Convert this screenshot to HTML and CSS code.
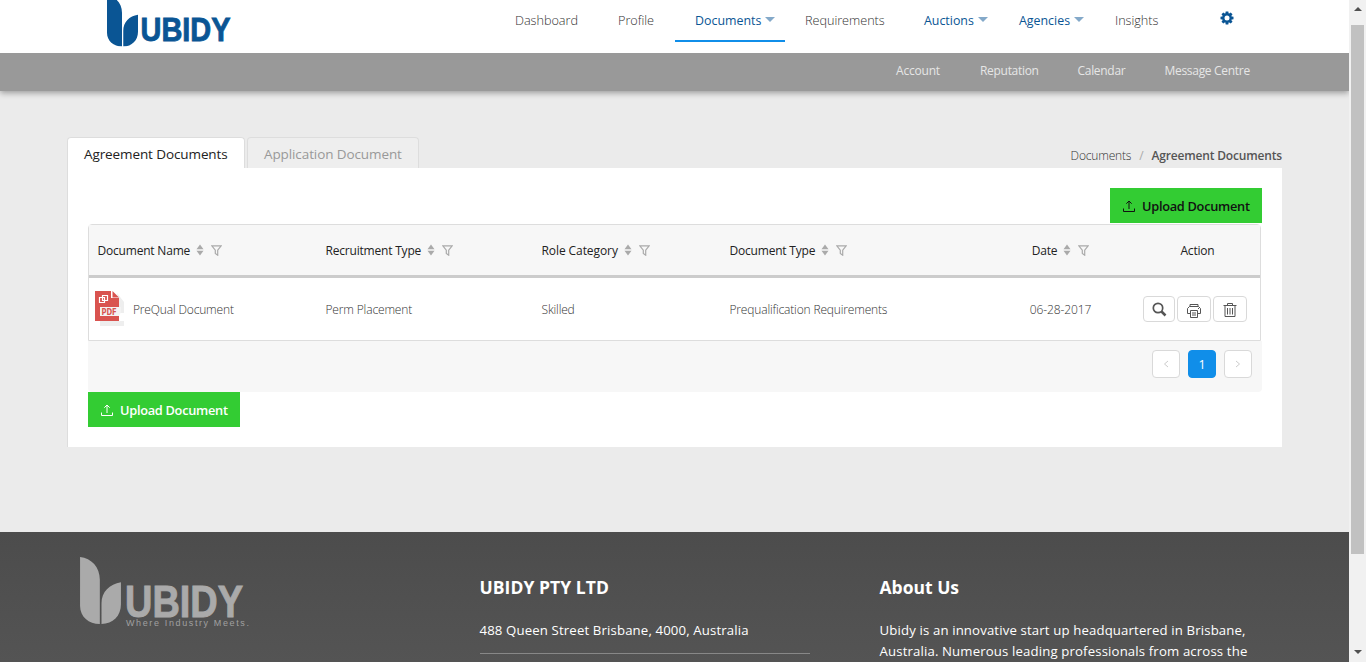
FILE: index.html
```html
<!DOCTYPE html>
<html lang="en">
<head>
<meta charset="utf-8">
<title>Ubidy - Agreement Documents</title>
<link rel="stylesheet" href="styles.css">
</head>
<body>
<svg class="defs" width="0" height="0">
  <symbol id="sort" viewBox="0 0 8 12"><path d="M4 .5 7.500 5.200H.5zM4 11.500 7.500 6.800H.5z"/></symbol>
  <symbol id="filter" viewBox="0 0 11 11"><path d="M.8.9h9.400L6.700 5.200v5L4.300 8.400V5.200z" fill="none" stroke="currentColor" stroke-width="1.200"/></symbol>
  <symbol id="upload" viewBox="0 0 12 12"><path d="M.5 8.500v3h11v-3M6 9V1M3.300 3.700 6 1l2.700 2.700" fill="none" stroke="currentColor"/></symbol>
  <symbol id="leaves" viewBox="0 0 122 200"><path d="M0 0C34 4 59 30 59 68V200C26 200 0 178 0 146zM64 200V138C64 104 88 80 122 75V142C122 176 98 200 64 200z"/></symbol>
</svg>
<div class="shell">
  <div class="page">
    <header class="topbar">
      <div class="brand">
        <svg viewBox="0 0 126 53" width="126" height="53" fill="#0a5594"><use href="#leaves" x="0" y="-4.500" width="31" height="51"/><text class="brand-word" x="33.500" y="41" textLength="90" lengthAdjust="spacingAndGlyphs">UBIDY</text></svg>
      </div>
      <nav class="nav">
        <a class="w-dash"><span>Dashboard</span></a>
        <a class="w-prof"><span>Profile</span></a>
        <a class="w-docs active"><span>Documents</span><i class="caret"></i></a>
        <a class="w-req"><span>Requirements</span></a>
        <a class="w-auc blue"><span>Auctions</span><i class="caret"></i></a>
        <a class="w-agn blue"><span>Agencies</span><i class="caret"></i></a>
        <a class="w-ins"><span>Insights</span></a>
        <a class="gear"><svg viewBox="0 0 14 14" width="14" height="14"><g fill="#0a5594"><path id="tooth" d="M5.700.5h2.600l.5 3h-3.600z"/><use href="#tooth" transform="rotate(45 7 7)"/><use href="#tooth" transform="rotate(90 7 7)"/><use href="#tooth" transform="rotate(135 7 7)"/><use href="#tooth" transform="rotate(180 7 7)"/><use href="#tooth" transform="rotate(225 7 7)"/><use href="#tooth" transform="rotate(270 7 7)"/><use href="#tooth" transform="rotate(315 7 7)"/></g><circle cx="7" cy="7" r="3.600" fill="none" stroke="#0a5594" stroke-width="2.200"/></svg></a>
      </nav>
    </header>
    <nav class="subnav"><a class="s1">Account</a><a class="s2">Reputation</a><a class="s3">Calendar</a><a class="s4">Message Centre</a></nav>

    <main class="content">
      <div class="tabrow">
        <div class="tab on"><span>Agreement Documents</span></div>
        <div class="tab"><span>Application Document</span></div>
        <div class="crumbs"><span class="c1">Documents</span><span class="slash">/</span><b>Agreement Documents</b></div>
      </div>
      <section class="panel">
        <div class="right"><button class="upload dark"><svg width="12" height="12"><use href="#upload"/></svg><span>Upload Document</span></button></div>
        <div class="table">
          <div class="row head">
            <div><span class="h1">Document Name</span><svg class="sort"><use href="#sort"/></svg><svg class="filter"><use href="#filter"/></svg></div>
            <div><span class="h2">Recruitment Type</span><svg class="sort"><use href="#sort"/></svg><svg class="filter"><use href="#filter"/></svg></div>
            <div><span class="h3">Role Category</span><svg class="sort"><use href="#sort"/></svg><svg class="filter"><use href="#filter"/></svg></div>
            <div><span class="h4">Document Type</span><svg class="sort"><use href="#sort"/></svg><svg class="filter"><use href="#filter"/></svg></div>
            <div class="mid"><span class="h5">Date</span><svg class="sort"><use href="#sort"/></svg><svg class="filter"><use href="#filter"/></svg></div>
            <div class="mid"><span class="h6">Action</span></div>
          </div>
          <div class="row body">
            <div class="doc">
              <svg width="29" height="35" viewBox="0 0 29 35"><path d="M5 30h24v5H5zM24 11h5v11h-5zM22 2l7 9h-5z" fill="#eee"/><path d="M0 0h16v7h8v23H0z" fill="#d9534f"/><path d="M17.500 0 24 6.500h-6.500z" fill="#d9534f"/><path d="M4.500 6.500h5v5h-5zM7.500 4.500h5v5h-5z" fill="none" stroke="#fff" stroke-width="1.200"/><path d="M5 16h21v5l-2 4H5z" fill="#f3f3f3"/><text class="pdf" x="6.500" y="24" textLength="15" lengthAdjust="spacingAndGlyphs">PDF</text></svg>
              <span class="d1">PreQual Document</span>
            </div>
            <div><span class="d2">Perm Placement</span></div>
            <div><span class="d3">Skilled</span></div>
            <div><span class="d4">Prequalification Requirements</span></div>
            <div class="mid"><span class="d5">06-28-2017</span></div>
            <div class="actions">
              <button class="act a1"><svg width="16" height="16" viewBox="0 0 16 16" fill="none" stroke="#555"><circle cx="7" cy="7" r="4.700" stroke-width="1.700"/><path d="m10.500 10.500 4 4" stroke-width="2.500"/></svg></button>
              <button class="act a2"><svg width="16" height="16" viewBox="0 0 16 16" fill="none" stroke="#555"><path d="M4 4.500V2.500h8v2M4.500 11.500h-3v-5l2-2h9l2 2v5h-3M4.500 8.500h7v7h-7zM6 11h4M6 13h4M12 6.500h1"/></svg></button>
              <button class="act a3"><svg width="16" height="16" viewBox="0 0 16 16" fill="none" stroke="#555"><path d="M1.500 3.500h13M5.500 3V1.500h5V3M3 3.500v11h10v-11M5.500 6v6.500M8 6v6.500M10.500 6v6.500"/></svg></button>
            </div>
          </div>
        </div>
        <div class="pager"><button><svg width="6" height="8" viewBox="0 0 6 8"><path d="M5 1 1.500 4 5 7"/></svg></button><button class="cur">1</button><button><svg width="6" height="8" viewBox="0 0 6 8"><path d="m1 1 3.500 3L1 7"/></svg></button></div>
        <button class="upload light"><svg width="12" height="12"><use href="#upload"/></svg><span>Upload Document</span></button>
      </section>
    </main>

    <footer class="footer">
      <div class="fcol flogo"><svg width="172" height="74" viewBox="0 0 172 74" fill="#aaa"><use href="#leaves" x="0" y="0" width="41" height="67"/><text class="foot-word" x="45" y="59.500" textLength="118" lengthAdjust="spacingAndGlyphs">UBIDY</text><text class="tag" x="46" y="69" textLength="123">Where Industry Meets.</text></svg></div>
      <div class="fcol"><h3 class="f1">UBIDY PTY LTD</h3><p class="addr"><span class="f2">488 Queen Street Brisbane, 4000, Australia</span></p></div>
      <div class="fcol"><h3 class="f3">About Us</h3><p class="about"><span class="f4">Ubidy is an innovative start up headquartered in Brisbane,</span><br><span class="f5">Australia. Numerous leading professionals from across the</span></p></div>
    </footer>
  </div>
  <div class="scroll"><i class="up"></i><div class="thumb"></div><i class="down"></i></div>
</div>
</body>
</html>
```
FILE: styles.css
```css
* { box-sizing: border-box; }
body { margin: 0; height: 662px; overflow: hidden; background: #ebebeb; color: #555; font: 12.5px/20px "Open Sans", "Noto Sans", sans-serif; }
.defs { display: block; height: 0; }
.shell { display: flex; height: 662px; }
.page { width: 1349px; height: 662px; display: flex; flex-direction: column; overflow: hidden; }
button { font: inherit; border: 0; padding: 0; display: flex; align-items: center; }
span, b, .subnav a { white-space: nowrap; }

.topbar { height: 53px; background: #fff; display: flex; flex: none; position: relative; z-index: 1; }
.brand { width: 388px; margin-left: 107px; }
.brand svg, .flogo svg { display: block; overflow: visible; }
.brand-word { font: bold 34px "Liberation Sans", sans-serif; stroke: #0a5594; stroke-width: .9; }
.nav { display: flex; height: 42px; }
.nav a { padding: 10px 0 0 20px; height: 42px; display: flex; color: #333; font-size: 12.7px; letter-spacing: -.04px; font-weight: 300; }
.nav a.active { border-bottom: 2px solid #108ee9; }
.nav a.active, .nav a.blue { color: #0a5594; font-weight: 400; font-size: 12.4px; padding-top: 11px; letter-spacing: 0; }
.w-dash { width: 103px; }
.w-prof { width: 77px; }
.w-docs { width: 110px; }
.w-req { width: 119px; }
.w-auc { width: 95px; }
.w-agn { width: 96px; }
.w-ins { width: 105px; }
.nav .gear { padding-top: 11px; }
.caret { border: 5.5px solid transparent; border-top-color: #84a9c9; border-bottom: 0; height: 0; margin: 6px 0 0 4px; }

.subnav { height: 38px; flex: none; background: #999; color: #e6e6e6; display: flex; padding: 8px 0 0 896px; font-size: 12px; letter-spacing: -.3px; box-shadow: 0 2px 6px rgba(0,0,0,.35); }
.s1 { width: 84px; }
.s2 { width: 97.5px; }
.s3 { width: 87px; }
.s1 { letter-spacing: -.2px; }

.content { height: 441px; flex: none; padding: 46px 67px 0; }
.tabrow { display: flex; height: 31px; }
.tab { height: 31px; width: 172px; padding: 6px 0 0 16px; border: 1px solid #ddd; border-bottom: 0; border-radius: 4px 4px 0 0; font-size: 13.5px; letter-spacing: -.1px; color: #999; background: #eee; }
.tab.on { width: 178px; margin-right: 2px; background: #fff; color: #222; }
.crumbs { margin: 9px 0 0 auto; display: flex; font-size: 12px; letter-spacing: -.17px; }
.c1 { font-weight: 300; color: #333; }
.slash { margin: 0 8px; color: #aaa; }
.crumbs b { font-weight: 600; }
.panel { background: #fff; border-left: 1px solid #ddd; height: 279px; padding: 20px 20px 0; }
.right { display: flex; justify-content: flex-end; height: 36px; }
.upload { width: 152px; height: 35px; background: #3c3; padding: 1px 0 0 13px; gap: 7px; font-weight: 600; font-size: 12.8px; letter-spacing: -.29px; }
.dark { color: #111; }
.light { color: #fff; }
.table { width: 1173px; border: 1px solid #ddd; border-radius: 4px 4px 0 0; height: 117px; }
.row { display: grid; grid-template-columns: 228px 216px 188px 265px 149px 125px; align-items: center; }
.row > div { display: flex; align-items: center; padding-left: 8.500px; }
.row > .mid { padding: 0; justify-content: center; }
.head { height: 53px; background: #f7f7f7; border-bottom: 3px solid #ccc; color: #222; font-size: 12px; letter-spacing: -.2px; }
.head span { padding-top: 2px; }
.sort { width: 8px; height: 12px; margin: 0 7px 0 6px; fill: #aaa; }
.filter { width: 11px; height: 11px; color: #aaa; }
.h3 { letter-spacing: -.08px; }
.body { height: 62px; font-size: 12px; font-weight: 300; color: #333; letter-spacing: -.16px; }
.d2, .d5 { letter-spacing: -.1px; }
.d2 { letter-spacing: -.15px; }
.body span { padding-top: 2px; }
.row > .doc { padding-left: 6px; }
.doc svg { margin: -2px 9px 0 0; }
.pdf { font: bold 9px "DejaVu Sans", sans-serif; fill: #d9534f; }
.row > .actions { padding-left: 8px; }
.act { height: 26px; justify-content: center; border: 1px solid #d9d9d9; border-radius: 4px; background: #fff; margin-right: 2px; }
.a1 { width: 32px; }
.a2, .a3 { width: 34px; }
.a2 svg, .a3 svg { margin-top: 1px; }
.pager { height: 51px; background: #f7f7f7; border-radius: 0 0 4px 4px; display: flex; justify-content: flex-end; gap: 8px; padding: 9px 10px 0 0; }
.pager button { width: 28px; height: 28px; justify-content: center; background: #fff; border: 1px solid #d9d9d9; border-radius: 4px; }
.pager path { fill: none; stroke: #ccc; }
.pager .cur { background: #108ee9; border-color: #108ee9; color: #fff; padding-top: 2px; }

.footer { height: 130px; flex: none; background: linear-gradient(#4c4c4c, #545454); color: #fff; display: flex; padding-left: 80px; font-size: 13.2px; }
.fcol { width: 400px; padding-top: 44px; }
.flogo { padding-top: 25px; }
.foot-word { font: bold 45px "Liberation Sans", sans-serif; stroke: #aaa; stroke-width: 1; }
.tag { font: 9px "Liberation Sans", sans-serif; fill: #a0a0a0; }
.footer h3 { margin: 0 0 0 -.5px; font-size: 17.5px; line-height: 22px; font-weight: 700; }
.f1 { letter-spacing: .05px; }
.footer p { margin: 22px 0 0 -.5px; line-height: 21px; letter-spacing: .14px; }
.footer .addr { width: 330.500px; height: 34px; border-bottom: 1px solid #888; }

.scroll { width: 17px; background: #f1f1f1; display: flex; flex-direction: column; align-items: center; }
.thumb { width: 13px; height: 529px; background: #c1c1c1; margin: 14px 0 96px; }
.up, .down { border: 4px solid transparent; }
.up { border-top: 0; border-bottom-color: #505050; margin-top: 7px; }
.down { border-bottom: 0; border-top-color: #505050; }
```
